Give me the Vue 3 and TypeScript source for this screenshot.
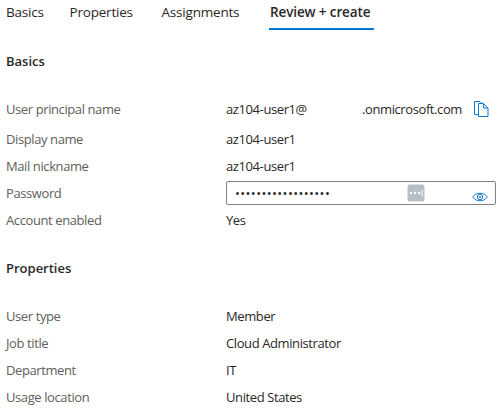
<script setup lang="ts">
interface Detail {
  label: string
  value: string
  kind?: 'principal' | 'password'
}

const tabs: string[] = ['Basics', 'Properties', 'Assignments', 'Review + create']
const activeTab = 'Review + create'

const basics: Detail[] = [
  { label: 'User principal name', value: 'az104-user1@', kind: 'principal' },
  { label: 'Display name', value: 'az104-user1' },
  { label: 'Mail nickname', value: 'az104-user1' },
  { label: 'Password', value: '•'.repeat(18), kind: 'password' },
  { label: 'Account enabled', value: 'Yes' },
]

const properties: Detail[] = [
  { label: 'User type', value: 'Member' },
  { label: 'Job title', value: 'Cloud Administrator' },
  { label: 'Department', value: 'IT' },
  { label: 'Usage location', value: 'United States' },
]
</script>

<template>
  <main class="review">
    <nav class="tabs">
      <button v-for="tab in tabs" :key="tab" class="tab" :class="{ active: tab === activeTab }">
        {{ tab }}
      </button>
    </nav>

    <h2 class="heading first">Basics</h2>
    <dl class="details">
      <div v-for="row in basics" :key="row.label" class="row" :class="row.kind">
        <dt>{{ row.label }}</dt>
        <dd v-if="row.kind === 'principal'" class="principal-value">
          <span class="alias">{{ row.value }}</span>
          <span class="domain">.onmicrosoft.com</span>
          <svg class="copy" width="15" height="17" viewBox="0 0 15 17" fill="none" stroke="#0f78d4">
            <path d="M4.500 13.500h-4V.5h5.500l2 2" />
            <path d="M4.500 2.500h5l4.500 4.500v8.500h-9.500z" fill="#fff" />
            <path d="M9.500 2.500v4.500h4.500" />
          </svg>
        </dd>
        <dd v-else-if="row.kind === 'password'" class="field">
          <span class="dots">{{ row.value }}</span>
          <svg class="manager" width="18" height="18" viewBox="0 0 18 18">
            <rect x=".5" y=".5" width="17" height="17" rx="2.5" fill="#b8bec8" />
            <g fill="#fff">
              <circle cx="4" cy="9" r="1.2" />
              <circle cx="8" cy="9" r="1.2" />
              <circle cx="12" cy="9" r="1.2" />
              <rect x="14.6" y="6" width="1" height="6.5" />
            </g>
          </svg>
          <svg class="eye" width="16" height="10" viewBox="0 0 16 10" fill="none" stroke="#1b78d0">
            <path d="M.7 5C3 2 5.200 1.200 8 1.200S13 2 15.300 5C13 8 10.800 8.800 8 8.800S3 8 .7 5z" />
            <circle cx="8" cy="5" r="2.700" />
            <circle cx="8" cy="5" r="1" fill="#1b78d0" stroke="none" />
          </svg>
        </dd>
        <dd v-else>{{ row.value }}</dd>
      </div>
    </dl>

    <h2 class="heading second">Properties</h2>
    <dl class="details">
      <div v-for="row in properties" :key="row.label" class="row">
        <dt>{{ row.label }}</dt>
        <dd>{{ row.value }}</dd>
      </div>
    </dl>
  </main>
</template>

<style>
body {
  margin: 0;
  background: #fff;
}
</style>

<style scoped>
.review {
  box-sizing: border-box;
  width: 503px;
  height: 411px;
  padding-left: 6px;
  overflow: hidden;
  color: #292827;
  font: 13px/27px "Segoe UI", "Open Sans", sans-serif;
}
.tabs {
  display: grid;
  grid-template-columns: 63.5px 92px 107.5px 105px;
  height: 30px;
}
.tab {
  box-sizing: border-box;
  display: flex;
  align-items: flex-start;
  height: 30px;
  padding: 0;
  border: 0;
  background: none;
  color: inherit;
  font: inherit;
  font-size: 13.5px;
  line-height: 24px;
  letter-spacing: -0.2px;
  white-space: nowrap;
}
.tab.active {
  padding-left: 1px;
  border-bottom: 2px solid #0078d4;
  font-weight: 600;
  letter-spacing: -0.12px;
}
.heading {
  margin: 0;
  font-size: 13px;
  font-weight: 600;
  line-height: 27px;
}
.first {
  padding: 18px 0;
}
.second {
  padding: 21px 0;
}
.details {
  margin: 0;
  letter-spacing: -0.4px;
}
.row {
  display: grid;
  grid-template-columns: 220px 270px;
  height: 27px;
}
.row.principal {
  height: 33px;
  line-height: 33px;
}
dt {
  color: #605e5c;
}
dd {
  margin: 0;
}
.principal-value {
  display: flex;
  align-items: center;
}
.alias {
  width: 136px;
}
.domain {
  width: 112px;
}
.copy {
  margin-bottom: 1px;
}
.field {
  box-sizing: border-box;
  display: flex;
  align-items: center;
  height: 24px;
  margin-top: 1px;
  padding-left: 8px;
  border: 1px solid #858381;
  border-radius: 2px;
}
.dots {
  width: 172px;
  letter-spacing: 0.4px;
}
.eye {
  margin: 7px 0 0 47px;
}
</style>
